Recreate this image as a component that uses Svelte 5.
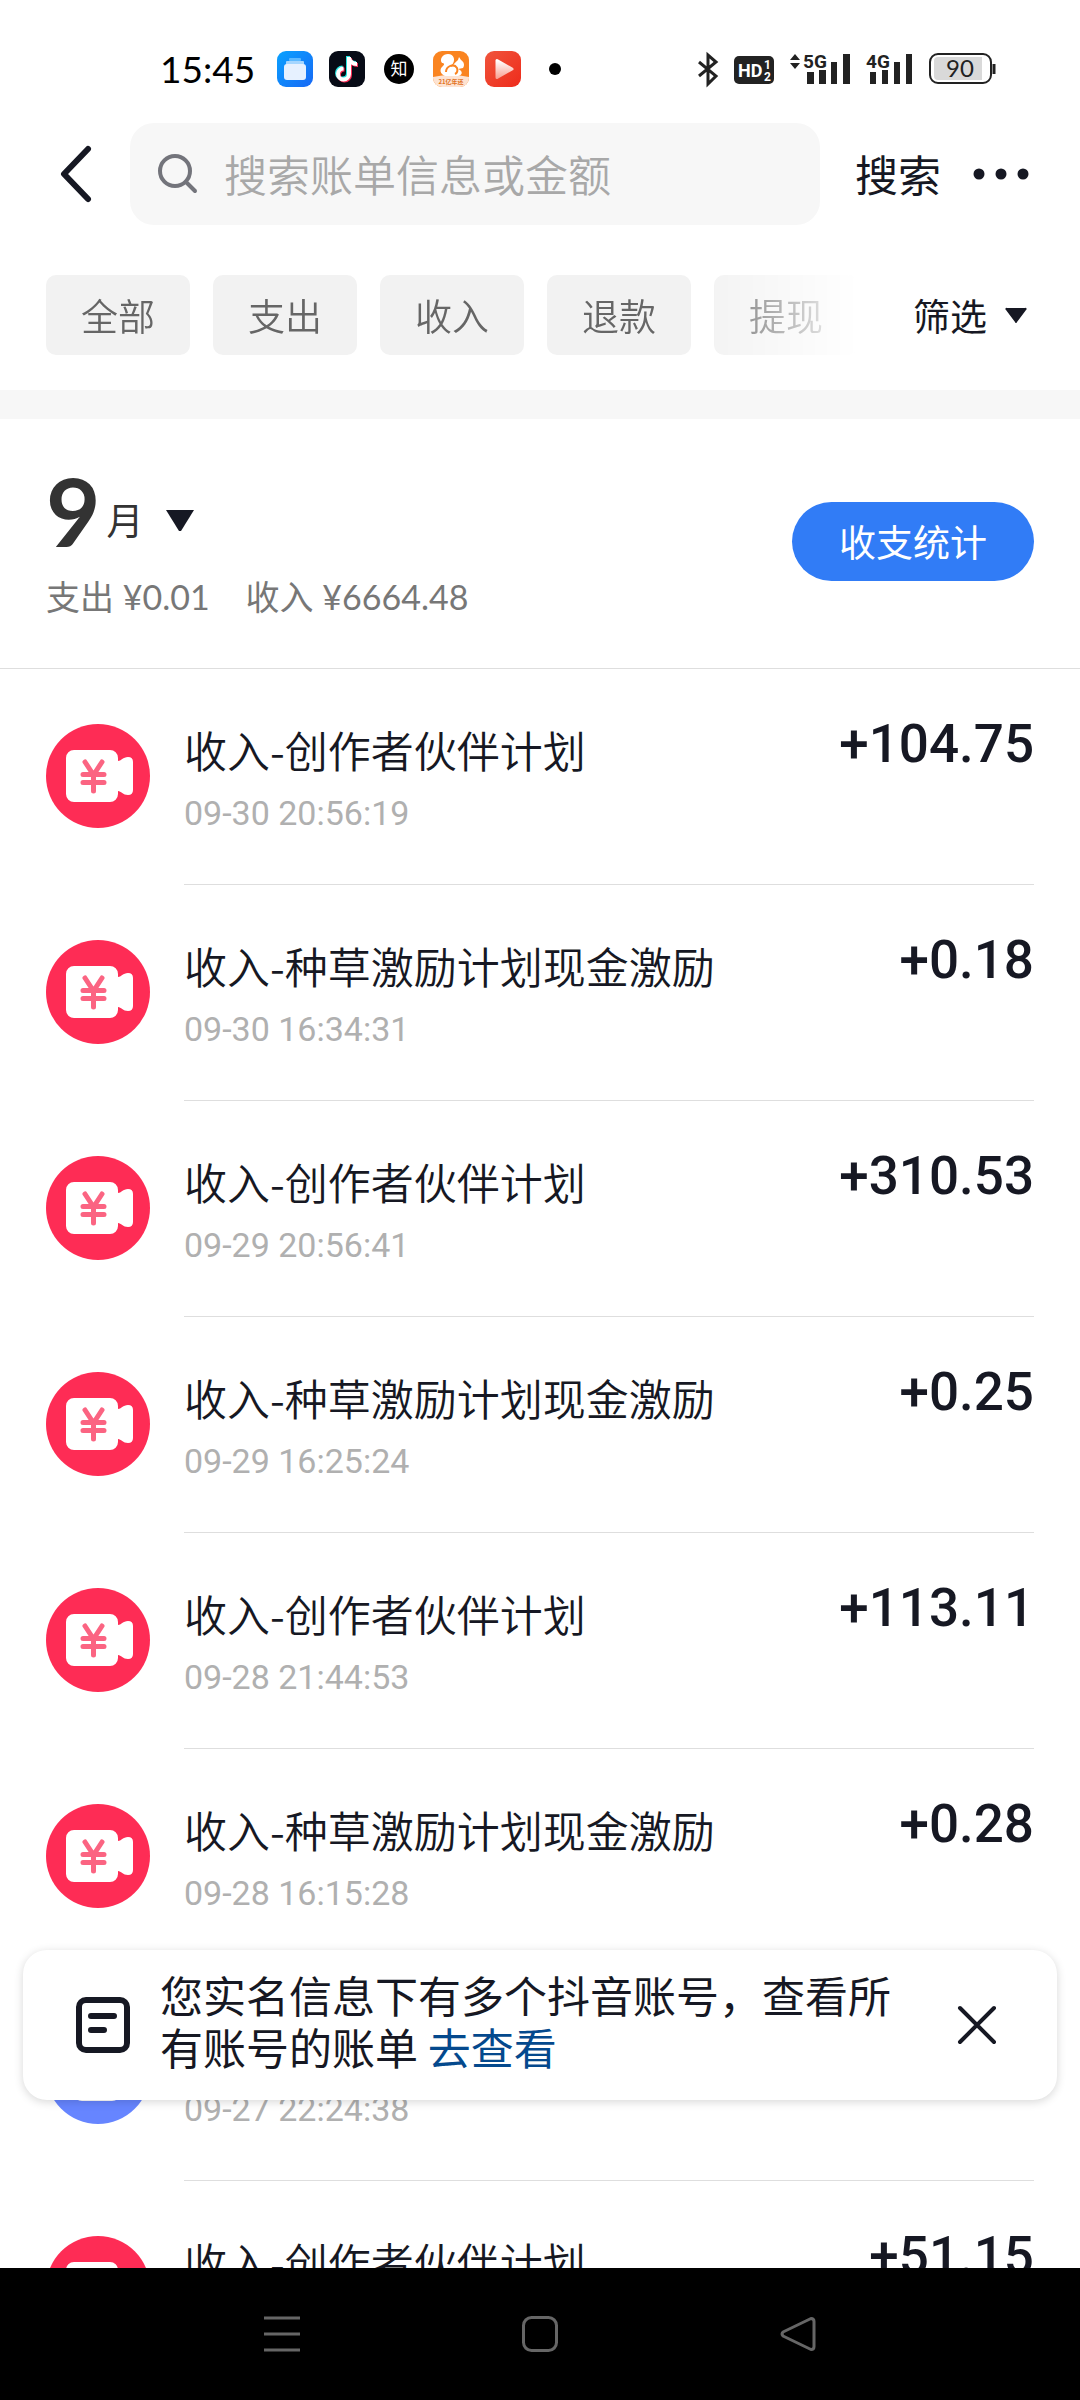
<script>
	const filters = ['全部', '支出', '收入', '退款', '提现'];

	const records = [
		{ kind: 'income', title: '收入-创作者伙伴计划', time: '09-30 20:56:19', amount: '+104.75' },
		{ kind: 'income', title: '收入-种草激励计划现金激励', time: '09-30 16:34:31', amount: '+0.18' },
		{ kind: 'income', title: '收入-创作者伙伴计划', time: '09-29 20:56:41', amount: '+310.53' },
		{ kind: 'income', title: '收入-种草激励计划现金激励', time: '09-29 16:25:24', amount: '+0.25' },
		{ kind: 'income', title: '收入-创作者伙伴计划', time: '09-28 21:44:53', amount: '+113.11' },
		{ kind: 'income', title: '收入-种草激励计划现金激励', time: '09-28 16:15:28', amount: '+0.28' },
		{ kind: 'withdraw', title: '', time: '09-27 22:24:38', amount: '' },
		{ kind: 'income', title: '收入-创作者伙伴计划', time: '', amount: '+51.15' }
	];

	let keyword = $state('');
	let showNotice = $state(true);
</script>

<div class="screen">
	<div class="status">
		<span class="clock">15:45</span>
		<div class="apps">
			<svg width="36" height="36" viewBox="0 0 36 36">
				<defs>
					<linearGradient id="files" x1="0" y1="0" x2="1" y2="1">
						<stop offset="0" stop-color="#0aa2ff" />
						<stop offset="1" stop-color="#1768f5" />
					</linearGradient>
				</defs>
				<rect width="36" height="36" rx="9" fill="url(#files)" />
				<rect x="12" y="7" width="12" height="3" rx="1" fill="#5cb9ff" />
				<rect x="9" y="10" width="18" height="4" rx="1" fill="#a5d6ff" />
				<rect x="7" y="13" width="22" height="16" rx="3" fill="#e6f1ff" />
			</svg>
			<svg width="36" height="36" viewBox="0 0 36 36">
				<rect width="36" height="36" rx="9" fill="#070b16" />
				<g fill="none" stroke-width="4">
					<path d="M19 5v17a5.5 5.5 0 1 1-5.500-5.500M19 6c1 4 4 6 8 6" stroke="#25e4e0" />
					<path d="M21 7v17a5.500 5.500 0 1 1-5.500-5.500M21 8c1 4 4 6 8 6" stroke="#fb2c55" />
					<path d="M20 6v17a5.500 5.500 0 1 1-5.500-5.500M20 7c1 4 4 6 8 6" stroke="#fff" />
				</g>
			</svg>
			<svg width="36" height="36" viewBox="0 0 36 36">
				<circle cx="18" cy="18" r="15" fill="#000" />
				<text x="18" y="24" text-anchor="middle" font-size="17" fill="#fff">知</text>
			</svg>
			<svg width="36" height="36" viewBox="0 0 36 36">
				<defs>
					<clipPath id="ucClip"><rect width="36" height="36" rx="9" /></clipPath>
				</defs>
				<g clip-path="url(#ucClip)">
					<rect width="36" height="36" fill="#fa8420" />
					<path d="M0 26q18-4 36 0v10H0z" fill="#fde3d2" />
				</g>
				<path d="M12 25c-5-2-6-7-2-10 2-2 1-3-1-3-3-4 1-9 6-9 6 0 8 6 4 11-1 1-1 2 0 2 1-3 4-5 6-7l1-3 2 3c3 2 4 5 2 8l-5 1c5 2 5 6 0 7z" fill="#fff" />
				<path d="M13 21c0-6 8-9 11-4 1 3 0 5-2 6" fill="none" stroke="#fa8420" stroke-width="2" />
				<text x="18" y="33" text-anchor="middle" font-size="6" font-weight="700" fill="#e2711d">21亿年还</text>
			</svg>
			<svg width="36" height="36" viewBox="0 0 36 36">
				<defs>
					<linearGradient id="video" x1="0" y1="0" x2="1" y2="1">
						<stop offset="0" stop-color="#f0553c" />
						<stop offset="1" stop-color="#ee2b1b" />
					</linearGradient>
					<linearGradient id="play" x1="0" y1="0" x2="0" y2="1">
						<stop offset="0" stop-color="#fff" />
						<stop offset="1" stop-color="#f9a598" />
					</linearGradient>
				</defs>
				<rect width="36" height="36" rx="9" fill="url(#video)" />
				<path d="M12 9.500v17L27 18z" fill="url(#play)" stroke="url(#play)" stroke-width="3" stroke-linejoin="round" />
			</svg>
			<i class="more-dot"></i>
		</div>
		<div class="signals">
			<svg width="20" height="36" viewBox="0 0 20 36" fill="none" stroke="#222" stroke-width="3">
				<path d="M1 11l17 14-8 8V4l8 7L1 25" />
			</svg>
			<svg width="40" height="36" viewBox="0 0 40 36">
				<rect y="5" width="40" height="28" rx="5" fill="#222" />
				<text x="4" y="26" font-size="18" font-weight="700" fill="#fff">HD</text>
				<text x="30" y="18" font-size="12" font-weight="700" fill="#fff">1</text>
				<text x="30" y="30" font-size="12" font-weight="700" fill="#fff">2</text>
			</svg>
			<svg width="60" height="36" viewBox="0 0 60 36" fill="#222">
				<path d="M0 9l5-6 5 6zM0 12l5 6 5-6z" />
				<text x="13" y="17" font-size="19" font-weight="700">5G</text>
				<path d="M17 21h7v12h-7zM29 19h7v14h-7zM41 11h6v22h-6zM53 3h7v30h-7z" />
			</svg>
			<svg width="47" height="36" viewBox="0 0 47 36" fill="#222">
				<text x="0" y="17" font-size="19" font-weight="700">4G</text>
				<path d="M4 21h6v12H4zM16 19h6v14h-6zM28 11h6v22h-6zM40 3h6v30h-6z" />
			</svg>
			<svg width="68" height="36" viewBox="0 0 68 36">
				<rect x="1" y="3" width="61" height="29" rx="8" fill="#fff" stroke="#222" stroke-width="2" />
				<path d="M9 6h44v23H9a4 4 0 0 1-4-4V10a4 4 0 0 1 4-4z" fill="#d9d9d9" />
				<path d="M65 13v10" stroke="#222" stroke-width="3" />
				<text class="level" x="31" y="26" text-anchor="middle" font-size="24" fill="#222">90</text>
			</svg>
		</div>
	</div>

	<header class="topbar">
		<button class="back" aria-label="返回">
			<svg width="34" height="60" viewBox="0 0 34 60" fill="none" stroke="#161823" stroke-width="6" stroke-linecap="round" stroke-linejoin="round">
				<path d="M28 5L4 30l24 25" />
			</svg>
		</button>
		<label class="search">
			<svg width="40" height="40" viewBox="0 0 40 40" fill="none" stroke="#73747b" stroke-width="4" stroke-linecap="round">
				<circle cx="17" cy="17" r="15" />
				<path d="M28 28l9 9" />
			</svg>
			<input type="text" placeholder="搜索账单信息或金额" aria-label="搜索账单信息或金额" bind:value={keyword} />
		</label>
		<button class="search-btn">搜索</button>
		<button class="more" aria-label="更多">
			<svg width="56" height="12" viewBox="0 0 56 12" fill="#161823">
				<circle cx="6" cy="6" r="5.500" />
				<circle cx="28" cy="6" r="5.500" />
				<circle cx="50" cy="6" r="5.500" />
			</svg>
		</button>
	</header>

	<nav class="filters">
		<div class="chips">
			{#each filters as filter}
				<button class="chip">{filter}</button>
			{/each}
		</div>
		<button class="filter-btn">
			筛选
			<svg width="20" height="16" viewBox="0 0 20 16" fill="#161823">
				<path d="M1 1h18a1 1 0 0 1 1 2l-9 12a1 1 0 0 1-2 0L0 3a1 1 0 0 1 1-2z" />
			</svg>
		</button>
	</nav>

	<section class="summary">
		<div>
			<button class="month">
				<span class="month-num">9</span>
				<span class="month-unit">月</span>
				<svg width="28" height="22" viewBox="0 0 28 22" fill="#161823">
					<path d="M0 0h28L15 21h-2z" />
				</svg>
			</button>
			<p class="totals">
				<span>支出 ¥0.01</span>
				<span>收入 ¥6664.48</span>
			</p>
		</div>
		<button class="stats">收支统计</button>
	</section>

	<main>
		<ul>
			{#each records as record}
				<li>
					<span class="icon {record.kind}">
						{#if record.kind === 'income'}
							<svg width="104" height="104" viewBox="0 0 104 104">
								<path d="M28 26h36a8 8 0 0 1 8 8v3c3 0 5-4 10-4q5 0 5 5v28q0 5-5 5c-5 0-7-4-10-4v3a8 8 0 0 1-8 8H28a8 8 0 0 1-8-8V34a8 8 0 0 1 8-8z" fill="#fff" />
								<path d="M39 38l8.500 13L56 38M37 50.500h21M37 58.500h21M47.500 51v16" fill="none" stroke="#fb6482" stroke-width="5" stroke-linecap="round" stroke-linejoin="round" />
							</svg>
						{:else}
							<svg width="104" height="104" viewBox="0 0 104 104">
								<rect x="28" y="28" width="46" height="53" rx="8" fill="#fff" />
							</svg>
						{/if}
					</span>
					<div class="body">
						<div class="info">
							<span class="title">{record.title}</span>
							<time>{record.time}</time>
						</div>
						<span class="amount">{record.amount}</span>
					</div>
				</li>
			{/each}
		</ul>

		{#if showNotice}
			<aside class="notice">
				<svg width="54" height="58" viewBox="0 0 54 58" fill="none" stroke="#161823" stroke-width="6" stroke-linecap="round">
					<rect x="3" y="4" width="48" height="50" rx="7" />
					<path d="M15 20h23M15 34h13" />
				</svg>
				<p>您实名信息下有多个抖音账号，查看所有账号的账单 <a href="#accounts">去查看</a></p>
				<button class="close" aria-label="关闭" onclick={() => (showNotice = false)}>
					<svg width="40" height="40" viewBox="0 0 40 40" stroke="#161823" stroke-width="4" stroke-linecap="round">
						<path d="M3 3l34 34M37 3L3 37" />
					</svg>
				</button>
			</aside>
		{/if}
	</main>

	<footer>
		<button aria-label="最近任务">
			<svg width="36" height="36" viewBox="0 0 36 36" stroke="#666" stroke-width="3">
				<path d="M0 2h36M0 18h36M0 34h36" />
			</svg>
		</button>
		<button aria-label="主屏幕">
			<svg width="36" height="36" viewBox="0 0 36 36" fill="none" stroke="#666" stroke-width="3">
				<rect x="1.500" y="1.500" width="33" height="33" rx="8" />
			</svg>
		</button>
		<button aria-label="返回">
			<svg width="36" height="36" viewBox="0 0 36 36" fill="none" stroke="#666" stroke-width="3" stroke-linejoin="round">
				<path d="M31 2.500L3 16q-2 2 0 4l28 13.500q3 0 3-3v-25q0-3-3-3z" />
			</svg>
		</button>
	</footer>
</div>

<style>
	.screen {
		display: flex;
		flex-direction: column;
		height: 100vh;
		background: #fff;
		color: #161823;
		font-family: 'Noto Sans CJK SC', sans-serif;
	}

	button {
		padding: 0;
		border: 0;
		background: none;
		color: inherit;
		font: inherit;
		cursor: pointer;
	}

	svg {
		display: block;
		flex: none;
		overflow: visible;
	}

	/* Status bar */
	.status {
		display: flex;
		align-items: center;
		height: 40px;
		padding: 49px 83px 0 160px;
	}

	.clock {
		width: 117px;
		padding-bottom: 2px;
		font-family: Lato, sans-serif;
		font-size: 37px;
		color: #000;
	}

	.apps {
		display: flex;
		align-items: center;
		gap: 16px;
	}

	.more-dot {
		width: 12px;
		height: 12px;
		margin-left: 12px;
		border-radius: 50%;
		background: #000;
	}

	.signals {
		display: flex;
		align-items: center;
		gap: 16px;
		margin-left: auto;
		font-family: Roboto, sans-serif;
	}

	.level {
		font-family: Lato, sans-serif;
	}

	/* Top bar */
	.topbar {
		display: flex;
		align-items: center;
		padding: 34px 51px 0 60px;
	}

	.back {
		width: 70px;
	}

	.search {
		display: flex;
		flex: 1;
		align-items: center;
		gap: 26px;
		height: 102px;
		padding: 0 28px;
		border-radius: 24px;
		background: #f7f7f7;
	}

	.search input {
		flex: 1;
		min-width: 0;
		padding: 0 0 2px;
		border: 0;
		outline: 0;
		background: none;
		font-family: inherit;
		font-size: 43px;
		font-weight: 350;
		color: #161823;
	}

	.search input::placeholder {
		color: #a8a8a8;
		opacity: 1;
	}

	.search-btn {
		margin: 0 32px 0 35px;
		padding-bottom: 2px;
		font-size: 43px;
	}

	/* Filters */
	.filters {
		display: flex;
		align-items: center;
		padding: 50px 54px 35px 46px;
		border-bottom: 29px solid #f7f7f7;
	}

	.chips {
		display: flex;
		flex: 1;
		gap: 23px;
		min-width: 0;
		overflow: hidden;
		mask-image: linear-gradient(to right, #000 80%, transparent);
	}

	.chip {
		flex: none;
		width: 144px;
		height: 80px;
		border-radius: 10px;
		background: #f2f2f2;
		font-size: 37px;
		font-weight: 350;
		color: #666;
	}

	.filter-btn {
		display: flex;
		align-items: center;
		gap: 19px;
		margin-left: 54px;
		font-size: 37px;
	}

	/* Month summary */
	.summary {
		display: flex;
		align-items: center;
		justify-content: space-between;
		padding: 44px 46px 49px;
		border-bottom: 1px solid #dedede;
	}

	.month {
		display: flex;
		align-items: center;
	}

	.month-num {
		font-family: Lato, sans-serif;
		font-size: 94px;
		font-weight: 700;
		line-height: 96px;
		color: #333;
	}

	.month-unit {
		margin: 0 22px 0 6px;
		padding-top: 16px;
		font-size: 37px;
		color: #333;
	}

	.month svg {
		margin-top: 20px;
	}

	.totals {
		display: flex;
		gap: 36px;
		margin: 16px 0 0;
		font-family: Lato, 'Noto Sans CJK SC', sans-serif;
		font-size: 34px;
		line-height: 44px;
		color: #777;
	}

	.stats {
		height: 79px;
		padding: 0 47px;
		border-radius: 40px;
		background: #317cf6;
		font-size: 37px;
		color: #fff;
	}

	/* Records */
	main {
		position: relative;
		flex: 1;
		min-height: 0;
		overflow: hidden;
	}

	ul {
		margin: 0;
		padding: 0;
		list-style: none;
	}

	li {
		display: flex;
		gap: 34px;
		padding: 0 46px;
	}

	.icon {
		flex: none;
		width: 104px;
		height: 104px;
		margin-top: 55px;
		border-radius: 50%;
		background: #fe2c55;
	}

	.icon.withdraw {
		background: #6685ff;
	}

	.body {
		display: flex;
		flex: 1;
		justify-content: space-between;
		height: 215px;
		border-bottom: 1px solid #dedede;
	}

	.info {
		display: flex;
		flex-direction: column;
		padding-top: 48px;
	}

	.title {
		height: 64px;
		font-size: 43px;
		font-weight: 350;
		line-height: 64px;
	}

	time {
		margin-top: 10px;
		font-family: Roboto, sans-serif;
		font-size: 34px;
		line-height: 44px;
		color: #b0b0b0;
	}

	.amount {
		padding-top: 43px;
		font-family: Roboto, sans-serif;
		font-size: 53px;
		font-weight: 500;
		line-height: 64px;
	}

	/* Notice over the list */
	.notice {
		position: absolute;
		right: 23px;
		bottom: 168px;
		left: 23px;
		display: flex;
		align-items: center;
		height: 150px;
		padding: 0 60px 0 53px;
		box-sizing: border-box;
		border-radius: 24px;
		background: #fff;
		box-shadow: 0 2px 10px rgba(0, 0, 0, 0.16);
	}

	.notice p {
		flex: 1;
		margin: 0 40px 10px 30px;
		font-size: 43px;
		line-height: 52px;
	}

	.notice a {
		display: inline-block;
		color: #04498d;
		text-decoration: none;
	}

	/* System navigation */
	footer {
		display: flex;
		justify-content: center;
		height: 132px;
		background: #000;
	}

	footer button {
		display: flex;
		align-items: center;
		justify-content: center;
		width: 258px;
	}
</style>
